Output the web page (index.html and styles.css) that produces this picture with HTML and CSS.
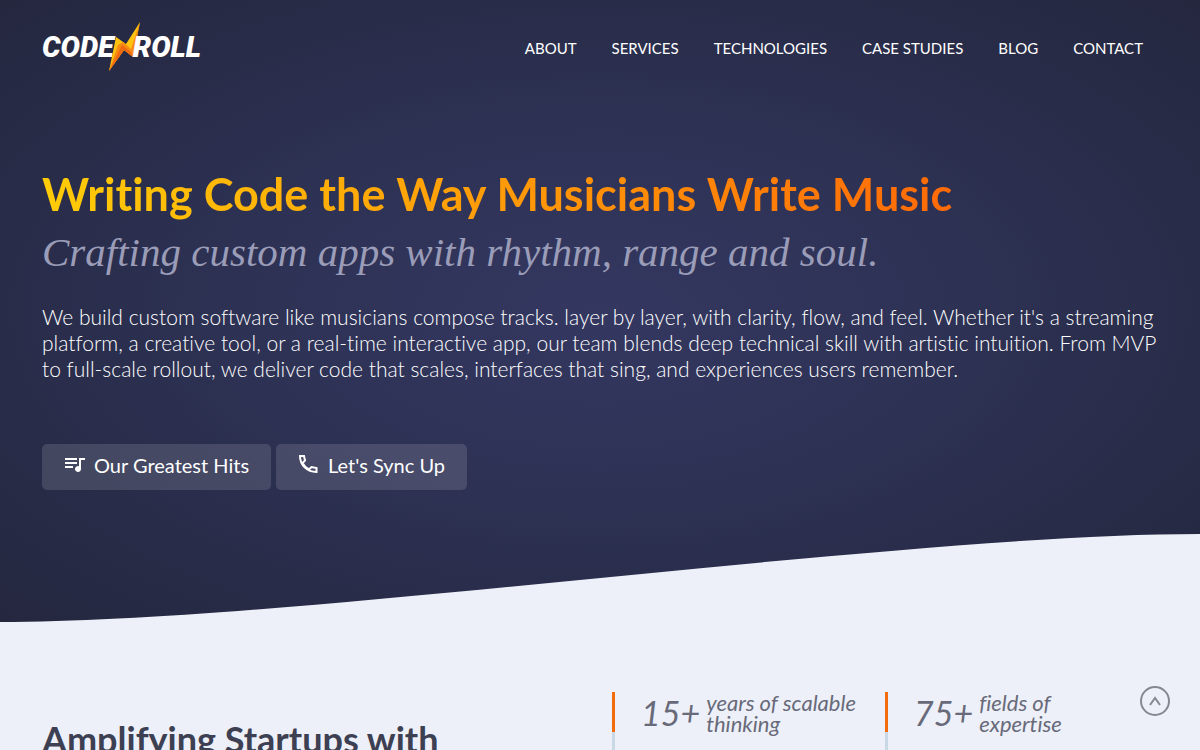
FILE: index.html
```html
<!DOCTYPE html>
<html lang="en">

<head>
    <meta charset="UTF-8">
    <meta name="viewport" content="width=device-width, initial-scale=1.0">
    <title>Code N Roll</title>
    <link rel="stylesheet" href="styles.css">
</head>

<body>
    <section class="hero">
        <header class="header">
            <a class="logo" href="#" aria-label="Code N Roll">
                <span>CODE</span>
                <svg class="bolt" viewBox="0 0 32 50" width="32" height="50" aria-hidden="true">
                    <path fill="#ffc20e" d="M31 0 L24 35 L15 28 L0 49 L7 15 L17 22 Z" />
                    <path fill="#f98b12" d="M31 0 L24 35 L15 28 L0 49 L9 23 L14 20 L22 27 Z" />
                    <path fill="#ee6a12" d="M24 35 L15 28 L0 49 L13 23 L22 30 Z" />
                </svg>
                <span>ROLL</span>
            </a>
            <nav class="nav">
                <a href="#">ABOUT</a>
                <a href="#">SERVICES</a>
                <a href="#">TECHNOLOGIES</a>
                <a href="#">CASE STUDIES</a>
                <a href="#">BLOG</a>
                <a href="#">CONTACT</a>
            </nav>
        </header>
        <div class="intro">
            <h1>Writing Code the Way Musicians Write Music</h1>
            <p class="tagline">Crafting custom apps with rhythm, range and soul.</p>
            <p class="text">We build custom software like musicians compose tracks. layer by layer, with clarity, flow, and feel. Whether it's a streaming platform, a creative tool, or a real-time interactive app, our team blends deep technical skill with artistic intuition. From MVP to full-scale rollout, we deliver code that scales, interfaces that sing, and experiences users remember.</p>
            <div class="buttons">
                <button class="btn" type="button">
                    <svg viewBox="0 0 24 24" width="24" height="24" fill="currentColor" aria-hidden="true">
                        <path d="M15 5H3v2h12V5zm0 4H3v2h12V9zM3 15h8v-2H3v2zM23 5h-6v8.200a3 3 0 1 0 2 2.800V7h4V5z" />
                    </svg>
                    Our Greatest Hits
                </button>
                <button class="btn" type="button">
                    <svg viewBox="0 0 24 24" width="24" height="24" fill="none" stroke="currentColor" stroke-width="2" aria-hidden="true">
                        <path d="M4 3h4l1 4.500-2.500 2.500c1.500 3 3.500 5 6.500 6.500l2.500-2.500 5 1v4C11 19 4 12 4 3z" />
                    </svg>
                    Let's Sync Up
                </button>
            </div>
        </div>
        <svg class="wave" viewBox="0 0 1200 88" preserveAspectRatio="none" aria-hidden="true">
            <path d="M0 88 C300 88 900 0 1200 0 V88 Z" />
        </svg>
    </section>
    <section class="about">
        <h2>Amplifying Startups with</h2>
        <div class="stats">
            <div class="stat">
                <span class="number">15+</span>
                <span class="label">years of scalable thinking</span>
            </div>
            <div class="stat">
                <span class="number">75+</span>
                <span class="label">fields of expertise</span>
            </div>
        </div>
    </section>
    <a class="to-top" href="#" aria-label="Back to top">
        <svg viewBox="0 0 30 30" width="30" height="30" fill="none" stroke="currentColor" stroke-width="2" aria-hidden="true">
            <circle cx="15" cy="15" r="14" />
            <path d="M10 19 L15 12 L20 19" />
        </svg>
    </a>
</body>

</html>
```

FILE: styles.css
```css
* {
    margin: 0;
    padding: 0;
    box-sizing: border-box;
}

body {
    font-family: Lato, "Open Sans", sans-serif;
    font-variant-ligatures: none;
    background-color: #edf0f8;
    color: #3d4052;
}

a {
    color: inherit;
    text-decoration: none;
}

.hero {
    background: radial-gradient(ellipse at center, #343861 0%, #2d3153 45%, #24273e 100%);
    color: #fff;
}

.header {
    display: flex;
    justify-content: space-between;
    align-items: center;
    height: 94px;
    padding: 0 57px 0 42px;
}

.logo {
    display: flex;
    align-items: center;
    font-family: Roboto, sans-serif;
    font-size: 29px;
    font-weight: 900;
    font-style: italic;
}

.bolt {
    margin: 0 -8px 0 -5px;
}

.nav {
    display: flex;
    gap: 35px;
    padding-top: 2px;
    font-size: 15px;
}

.intro {
    padding: 70px 42px 44px;
}

h1 {
    width: fit-content;
    font-size: 45px;
    line-height: 60px;
    font-weight: 700;
    background: linear-gradient(to right, #ffcc08, #ff6a08);
    -webkit-background-clip: text;
    background-clip: text;
    color: transparent;
}

.tagline {
    font-family: "Liberation Serif", cursive;
    font-size: 41px;
    line-height: 56px;
    font-style: italic;
    color: #9a9cb8;
}

.text {
    margin-top: 24px;
    font-size: 21px;
    font-weight: 300;
    line-height: 26px;
}

.buttons {
    display: flex;
    gap: 5px;
    margin-top: 62px;
}

.btn {
    display: flex;
    align-items: center;
    gap: 8px;
    height: 46px;
    padding: 0 22px 5px 20px;
    border: 0;
    border-radius: 5px;
    background-color: rgba(255, 255, 255, 0.13);
    color: #fff;
    font-family: inherit;
    font-size: 20px;
}

.wave {
    display: block;
    width: 100%;
    height: 88px;
    fill: #edf0f8;
}

.about {
    display: flex;
    padding: 70px 42px 0;
}

h2 {
    flex: 1;
    padding-top: 25px;
    font-size: 36px;
    line-height: 44px;
}

.stats {
    display: flex;
    width: 546px;
}

.stat {
    display: flex;
    flex: 1;
    align-items: flex-start;
    gap: 6px;
    padding-left: 26px;
    border-left: 3px solid;
    border-image: linear-gradient(#f26c0d 40px, #c8d8e4 40px) 1;
    font-style: italic;
    color: #686a7a;
}

.number {
    font-size: 34px;
    line-height: 42px;
}

.label {
    width: 156px;
    font-size: 22px;
    line-height: 21px;
}

.to-top {
    position: fixed;
    right: 30px;
    bottom: 34px;
    height: 30px;
    color: #858793;
}
```
